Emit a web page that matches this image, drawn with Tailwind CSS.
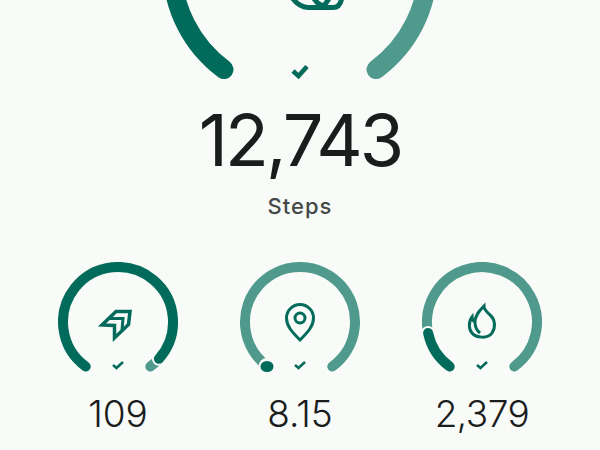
<!DOCTYPE html>
<html lang="en">
<head>
  <meta charset="UTF-8">
  <title>Daily goals</title>
  <script src="https://cdn.jsdelivr.net/npm/@tailwindcss/browser@4"></script>
</head>
<body class="bg-[#f8fbf8] w-[600px] h-[450px] overflow-hidden font-['Inter',sans-serif]">
  <main class="flex flex-col items-center">
    <!-- Steps ring, top is cut off by the screen -->
    <svg class="block" width="600" height="82" viewBox="0 0 600 82" fill="none">
      <path d="M224 69.500A128 128 0 0 1 172 -33" stroke="#006b5b" stroke-width="19" stroke-linecap="round"/>
      <path d="M376 69.500A128 128 0 0 0 428 -33" stroke="#4f9a8c" stroke-width="19" stroke-linecap="round"/>
      <path d="M291 -4 Q298 7 308 7.500 H333 Q341 7.500 342 -4" stroke="#006b5b" stroke-width="5"/>
      <path d="M313 -3 Q318 6 326 6 M330 -3 L324 6" stroke="#006b5b" stroke-width="5"/>
      <path d="M293 71 L298.500 76 L307 66.500" stroke="#006b5b" stroke-width="4.500"/>
    </svg>
    <div class="mt-[14px] text-[72px] leading-[88px] text-[#1b1c1c] tracking-[-3px]">12,743</div>
    <div class="mt-[8px] text-[22px] leading-[28px] font-[450] text-[#444947] tracking-[1px]">Steps</div>

    <div class="mt-[42px] grid grid-cols-3 w-[546px] justify-items-center">
      <div class="flex flex-col items-center">
        <svg width="120" height="112" viewBox="0 0 120 112" fill="none">
          <path d="M92.300 104.500A55 55 0 0 0 100.900 96.800" stroke="#4f9a8c" stroke-width="10" stroke-linecap="round"/>
          <circle cx="100.900" cy="96.800" r="7" fill="#f8fbf8"/>
          <path d="M27.700 104.500A55 55 0 1 1 100.900 96.800" stroke="#006b5b" stroke-width="10" stroke-linecap="round"/>
          <path d="M44 63 L58 49.500 H72 L70.500 62.500 L56.500 76 V63.500 Z" stroke="#006b5b" stroke-width="3.500"/>
          <path d="M52 56.500 H65 L64 68" stroke="#006b5b" stroke-width="3"/>
          <path d="M55 103 L58.500 106 L65 100" stroke="#006b5b" stroke-width="2.500"/>
        </svg>
        <div class="mt-[18px] text-[37px] leading-[44px] font-[350] text-[#1b1c1c]">109</div>
      </div>
      <div class="flex flex-col items-center">
        <svg width="120" height="112" viewBox="0 0 120 112" fill="none">
          <path d="M92.300 104.500A55 55 0 1 0 27.700 104.500" stroke="#4f9a8c" stroke-width="10" stroke-linecap="round"/>
          <circle cx="27" cy="104.500" r="8.500" fill="#f8fbf8"/>
          <ellipse cx="27" cy="104.500" rx="6.500" ry="5.500" fill="#006b5b"/>
          <path d="M60 78 C52 70 46.500 64 46.500 56 A13.500 13.500 0 0 1 73.500 56 C73.500 64 68 70 60 78 Z" stroke="#006b5b" stroke-width="3"/>
          <circle cx="60" cy="56" r="5" stroke="#006b5b" stroke-width="3"/>
          <path d="M55 103 L58.500 106 L65 100" stroke="#006b5b" stroke-width="2.500"/>
        </svg>
        <div class="mt-[18px] text-[37px] leading-[44px] font-[350] text-[#1b1c1c]">8.15</div>
      </div>
      <div class="flex flex-col items-center">
        <svg width="120" height="112" viewBox="0 0 120 112" fill="none">
          <path d="M92.300 104.500A55 55 0 1 0 6.100 71" stroke="#4f9a8c" stroke-width="10" stroke-linecap="round"/>
          <circle cx="6.100" cy="71" r="7" fill="#f8fbf8"/>
          <path d="M27.700 104.500A55 55 0 0 1 6.100 71" stroke="#006b5b" stroke-width="10" stroke-linecap="round"/>
          <path d="M58 71 C54 68 53 64 53 60 C53 53 58 48 62 44 C62 48 65 50 68 53 C73 57 74 65 70 71 C66 77 54 76 50 71 C47 68 46 60 50 55 C50 57 51 59 53 60" stroke="#006b5b" stroke-width="3"/>
          <path d="M55 103 L58.500 106 L65 100" stroke="#006b5b" stroke-width="2.500"/>
        </svg>
        <div class="mt-[18px] text-[37px] leading-[44px] font-[350] text-[#1b1c1c] tracking-[-0.5px]">2,379</div>
      </div>
    </div>
  </main>
</body>
</html>
